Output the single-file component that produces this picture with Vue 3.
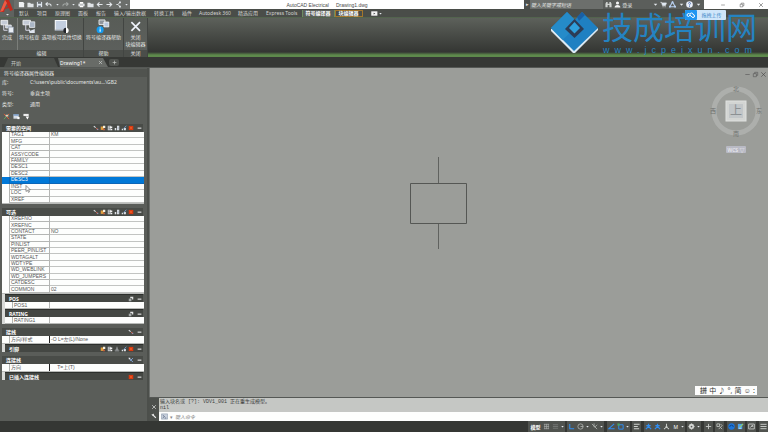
<script setup>
import { h, ref } from 'vue'

const W = '#e4e8ec', B = '#2f8df0', G = '#b4b8b4', R = '#d8390f', O = '#e0a040'
// Each icon is a list of [path, fill, stroke, strokeWidth] on an 8x8 grid
const icons = {
  newFile: [['M1 1h5l1 1.5V7H1z', '#eef0f2']],
  open: [['M0.5 2h3l1 1h3v4h-7z', '#dfe3e6']],
  save: [['M1 1h6v6H1z', '#dfe6ee'], ['M2.2 1h3.6v2.2H2.2zM2.5 5h3v2h-3z', '#6a6f74']],
  undo: [['M1 3.5h4.5q1.5 0 1.5 2.5M3 1.5L1 3.5l2 2', 'none', W, 1.2]],
  redo: [['M7 3.5H2.5Q1 3.5 1 6M5 1.5l2 2-2 2', 'none', '#a4a8a6', 1.2]],
  print: [['M0.5 3h7v3h-7z', W], ['M2 1h4v2H2zM2 5h4v2H2z', '#fff'], ['M2 4.5h4', 'none', '#777', 0.7]],
  left: [['M7.5 4H1.5M4 1.5L1.5 4 4 6.5', 'none', W, 1.3]],
  right: [['M0.5 4h6M4 1.5L6.5 4 4 6.5', 'none', W, 1.3]],
  net: [['M1.5 4h2l2-2.5M3.5 4l2 2.5', 'none', W, 1], ['M4.7 0.5h2v2h-2zM4.7 5.5h2v2h-2z', W]],
  caret: [['M2 3h4L4 5.5z', W]],
  bino: [['M0.5 3l1-2h1.5v2h2V1h1.5l1 2v4H5V4.5H3V7H0.5z', '#cfd2d0']],
  user: [['M4 0.5a1.8 1.8 0 1 1 0 3.6a1.8 1.8 0 1 1 0-3.6M0.7 7.5q0-3 3.3-3t3.3 3z', '#f2f2f2']],
  cart: [['M0.5 1.5h1.3l1 3.5h3.5l1-2.8H2.3', '#dfe8f4', W, 0.8], ['M3 6h1v1.2H3zM5.3 6h1v1.2h-1z', W]],
  tri: [['M4 1L7 6.5H1z', 'none', '#b8d0f0', 1.2], ['M3 0.5h2v2H3zM0 5.5h2v2H0zM6 5.5h2v2H6z', '#b8d0f0']],
  help: [['M4 0.2a3.8 3.8 0 1 1 0 7.6a3.8 3.8 0 1 1 0-7.6', '#e8eef8'], ['M2.9 3q0-1.3 1.1-1.3T5.1 3Q5 3.8 4 4.3v.8M4 5.7v1', 'none', '#3c62a8', 0.9]],
  min: [['M1.5 4h5', 'none', '#555', 0.7]],
  max: [['M1.5 3h3.5v3.5H1.5zM3 3V1.5h3.5V5H5', 'none', '#555', 0.7]],
  close: [['M1.5 1.5l5 5M6.5 1.5l-5 5', 'none', '#444', 0.7]],
  done: [['M0.5 0.7h3.6v2.4H0.5z', '#c4cbd6', '#fff', 0.4], ['M3 3.2h3v1.6H3z', '#bcc6d4', '#f4f4f4', 0.4], ['M4.6 4.3h2.6v3H4.6z', '#e9eef4', '#8d98a8', 0.4], ['M2 3v3h2', 'none', '#dde', 0.5]],
  check: [['M0.5 0.7h4v2.4h-4z', '#c4cbd6', '#fff', 0.4], ['M4 1.5h2.8v3H4z', '#aab6c6', '#edf0f4', 0.4], ['M3.4 4.8l1 1.5 2.4-1v2.2H4z', '#dfe5ee'], ['M2 3v3h2', 'none', '#dde', 0.5]],
  panel: [['M0.7 0.8h6v5h-6z', '#c3cfe0', '#f6f8fa', 0.6], ['M0.7 6h6', 'none', '#8f98a4', 0.8], ['M6.4 4.7a1.4 1.4 0 1 0 0 2.8z', '#20242a'], ['M6.4 4.7a1.4 1.4 0 1 1 0 2.8z', '#fff']],
  chelp: [['M1.6 0.5h3.2v2.4H1.6z', '#8e949b', '#e4e6e8', 0.5], ['M4.2 1.6h2.6v2.6H4.2z', '#b9c7dc', '#fff', 0.4], ['M2.2 3.8a1.9 1.9 0 1 1 0 3.8a1.9 1.9 0 1 1 0-3.8', '#149bf0'], ['M2.2 4.5v.5M2.2 5.4v1.4', 'none', '#fff', 0.6]],
  bigx: [['M1.8 1.7l4.6 4.6M6.4 1.7L1.8 6.3', 'none', '#eef2fa', 0.9]],
  x: [['M1.5 1.5l5 5M6.5 1.5l-5 5', 'none', '#c8cac8', 1.1]],
  plus: [['M4 1v6M1 4h6', 'none', '#c0c3c0', 1.1]],
  cam: [['M0.3 1.5h7v5h-7z', '#f4f4f4'], ['M3 3l2 1-2 1z', '#444']],
  axes: [['M1 1l6 6M7 1L3 5', 'none', '#e05a30', 1.1], ['M1 7l3-3', 'none', '#62a860', 1.1], ['M3 2h3v2H3z', '#ddd6c0']],
  props: [['M0.5 1.5h6v5h-6z', '#d6dde6'], ['M0.5 1.5h6V3h-6z', '#6b93c4'], ['M5 4.5h2.5v2.5H5z', '#fff']],
  drop: [['M0.5 1h6v2.5h-6z', '#eee'], ['M3 4h4L5 7.3z', '#fff']],
  move: [['M1 1.5l2.5 2', 'none', W, 1.4], ['M4.5 4l2 2.5', 'none', '#d86a5a', 1.4], ['M5 6.8h2V5z', '#7aa0d8']],
  add: [['M1 2h4v4.5H1z', O], ['M4 1h3v3H4z', '#f5f0e0'], ['M4 5h2.5v2H4z', '#c8603c']],
  copy: [['M1 1h4v6H1z', '#c8ccd0'], ['M4 2h3v2H4zM5 5h2v2H5z', '#f2f2f2'], ['M2 2.5h2M2 5h2', 'none', '#555', 0.8]],
  list: [['M1 4h2v3H1zM4 1h3v6H4z', '#dfe2e6'], ['M5 3h1M5 5h1', 'none', '#4f6b90', 0.9]],
  edit: [['M1 5h2v2H1zM4 4h2.5v3H4z', '#dfe2e6'], ['M3.5 5L7 1', 'none', '#7a9fd0', 1.2]],
  del: [['M1 1.2h6v5.6H1z', R], ['M2.5 2.5l3 3M5.5 2.5l-3 3', 'none', '#f26a30', 0.8]],
  minus: [['M1 4.2h6', 'none', '#f4f4f4', 1.6]],
  tree: [['M4 1v5M1 6.5h6M4 3.5l2 2M4 3.5l-2 2', 'none', '#bfc3c8', 0.9]],
  wire: [['M1 1.5l5.5 5M6.5 1.5L3 5', 'none', '#88aee4', 1.2], ['M1 1h2v2H1z', '#eee']],
  copies: [['M1 3.5h3.5V7H1z', '#a6abaa'], ['M3 1h4v3.5H5.5V3H3z', '#e6e8e8']],
  wrench: [['M2 2l4.5 4.5', 'none', '#eee', 1.5], ['M0.5 1.5L2 3.5 4 2 3 0.5 2.5 2z', '#eee']],
  prompt: [['M0.5 1h7v6h-7z', '#c8d0dc', '#8090a4', 0.6], ['M2 2.5L4 4 2 5.5M4.3 5.7H6', 'none', '#3a4e6a', 0.7]],
  grid: [['M1 1.5h6M1 4h6M1 6.5h6M2 1v6M4 1v6M6 1v6', 'none', '#a5a8a5', 0.8]],
  dots: [['M1 2h6M1 4h6M1 6h6', 'none', '#747774', 1.1]],
  ortho: [['M2 1v5.5h5', 'none', B, 1.2]],
  polar: [['M4 1a3 3 0 1 1-3 3M4 4h3M4 1a3 3 0 0 0-3 3', 'none', G, 0.9]],
  iso: [['M1 1l6 6M3.5 0.5v4M7 2L4 5', 'none', G, 0.9]],
  snap: [['M7 1L1 6.5h6.5', 'none', B, 1.2]],
  osnap: [['M2 2h5v5H2z', 'none', B, 1.1], ['M0.5 0.5h2.5v2.5H0.5z', '#4aa85a']],
  lines: [['M1 1.5h6.5M1 4h4.5M1 6.5h6', 'none', '#d0d3d0', 1.2]],
  man: [['M4 0.8v3L1 7M4 3.8L7 7M1.5 3h5', 'none', B, 1.4]],
  manGray: [['M4 0.8v3L1.3 7M4 3.8L6.7 7M2.5 5h3', 'none', '#c8ccc8', 1.2]],
  gear: [['M4 1.2a2.8 2.8 0 1 1 0 5.6a2.8 2.8 0 1 1 0-5.6M4 0.5v7M0.5 4h7', '#d6d9d6', '#d6d9d6', 0.8], ['M4 3a1 1 0 1 1 0 2a1 1 0 1 1 0-2', '#555']],
  units: [['M1 1h3v3H1zM5 1l2 2-4 4M5 5l2 2', 'none', '#c8ccc8', 0.9]],
  ball: [['M4 0.3a3.7 3.7 0 1 1 0 7.4a3.7 3.7 0 1 1 0-7.4', '#1c74d8'], ['M2 4.5a2 2 0 0 1 4 0', 'none', '#0f4282', 1]],
  note: [['M1 1h5v6H1z', '#4aa0ec'], ['M3 5l4-4', 'none', '#8ed06a', 1.3], ['M2 6h3', 'none', '#fff', 0.7]],
  full: [['M0.8 1.2h6.4v5.6H0.8z', 'none', '#d6d9d6', 0.9], ['M2.5 5l3-2M4 3h1.5v1.5', 'none', '#d6d9d6', 0.9]],
  menu: [['M0.5 1.5h7M0.5 4h7M0.5 6.5h7', 'none', '#d6d9d6', 1]],
}
const Ico = (p) => h('svg', { viewBox: '0 0 8 8', 'aria-hidden': 'true' },
  icons[p.n].map(([d, fill, stroke, w]) => h('path', { d, fill, stroke: stroke || 'none', 'stroke-width': w || 0 })))
Ico.props = ['n']

const quick = ['newFile', 'open', 'save', 'undo', 'caret', 'redo', 'caret', 'print', 'open', 'left', 'right', 'net', 'caret']
const tabs = ['默认', '项目', '原理图', '面板', '报告', '输入/输出数据', '转换工具', '插件', 'Autodesk 360', '精选应用', 'Express Tools', '符号编译器', '块编辑器']
const info = [['库:', 'C:\\users\\public\\documents\\au...\\GB2'], ['符号:', '垂直主项'], ['类型:', '通用']]
const tools = ['move', 'add', 'copy', 'list', 'edit', 'del']
const sections = [
  { title: '需要的空间', icons: tools, kind: 'r11', rows: [['TAG1', 'KM'], ['MFG'], ['CAT'], ['ASSYCODE'], ['FAMILY'], ['DESC1'], ['DESC2'], ['DESC3'], ['INST'], ['LOC'], ['XREF']] },
  { title: '可选', icons: tools, kind: 'r12', rows: [['XREFNO'], ['XREFNC'], ['CONTACT', 'NO'], ['STATE'], ['PINLIST'], ['PEER_PINLIST'], ['WDTAGALT'], ['WDTYPE'], ['WD_WEBLINK'], ['WD_JUMPERS'], ['CATDESC'], ['COMMON', '02']],
    subs: [{ title: 'POS', icons: ['copies'], rows: [['POS1']] }, { title: 'RATING', icons: ['copies'], rows: [['RATING1']] }] },
  { title: '接线', icons: ['move'], kind: 'one', rows: [['方向/样式', '-O L=左(L)/None']], subs: [{ title: '引脚', icons: ['add', 'copy', 'tree', 'edit', 'del'] }] },
  { title: '连接线', icons: ['wire'], kind: 'one', rows: [['方向', '　 T=上(T)']], subs: [{ title: '已插入连接线', icons: ['del'] }] },
]
const selected = ref('DESC3')
const status = ['grid', 'dots', 'caret', '|', 'ortho', 'polar', 'caret', 'iso', 'caret', '|', 'snap', 'osnap', 'caret', '|', 'lines', '|', 'man', 'man', 'manGray', 'M', 'caret', '|', 'gear', 'caret', '|', 'plus', '|', 'units', '|', 'ball', 'note', '|', 'full', '|', 'menu']
const command = ref('')
const query = ref('')
</script>

<template>
  <div class="app">
    <header class="top">
      <button class="logo" aria-label="A">
        <svg viewBox="0 0 14 16"><path d="M0 12L5 0h4l4 10-3 1-1-3-4 1-1 3z" fill="#c3281c" /><path d="M6 3l2 4-3 1z" fill="#5b5e5b" /><path d="M5 0L0 12l3-1 4-8z" fill="#ee5a44" /><path d="M6 14h3l-1.500 1.500z" fill="#ddd" /></svg>
      </button>
      <div class="stack">
        <div class="titlebar">
          <nav class="quick"><button v-for="(q, i) in quick" :key="i" :class="{ small: q === 'caret' }"><Ico :n="q" /></button></nav>
          <h1 class="title"><span>AutoCAD Electrical</span><span>Drawing1.dwg</span></h1>
          <label class="search"><span>▸</span><input v-model="query" placeholder="键入关键字或短语" /></label>
          <div class="account">
            <Ico n="bino" /><Ico n="user" /><button>登录</button><i></i><Ico n="caret" /><Ico n="cart" /><Ico n="tri" /><Ico n="caret" /><Ico n="help" /><Ico n="caret" />
          </div>
          <div class="winbtns"><button><Ico n="min" /></button><button><Ico n="max" /></button><button><Ico n="close" /></button></div>
        </div>
        <nav class="tabs">
          <button v-for="t in tabs" :key="t" :class="{ on: t === '符号编译器', box: t === '块编辑器' }">{{ t }}</button>
          <Ico n="cam" /><Ico n="caret" />
        </nav>
      </div>
    </header>

    <section class="ribbon">
      <div class="panel edit">
        <div class="cmds">
          <button class="first"><Ico n="done" />完成</button>
          <button><Ico n="check" />符号核查</button>
          <button><Ico n="panel" />选项板可见性切换</button>
        </div>
        <div class="cap">编辑</div>
      </div>
      <div class="panel aid">
        <div class="cmds"><button><Ico n="chelp" />符号编译器帮助</button></div>
        <div class="cap">帮助</div>
      </div>
      <div class="panel shut">
        <div class="cmds"><button><Ico n="bigx" />关闭<br />块编辑器</button></div>
        <div class="cap">关闭</div>
      </div>
    </section>

    <nav class="docs">
      <button class="doc">开始</button>
      <button class="doc cur">Drawing1*<Ico n="x" /></button>
      <button class="more"><Ico n="plus" /></button>
    </nav>

    <main class="work">
      <aside class="palette">
        <h2>符号编译器属性编辑器</h2>
        <dl><div v-for="r in info" :key="r[0]"><dt>{{ r[0] }}</dt><dd>{{ r[1] }}</dd></div></dl>
        <div class="tools"><button><Ico n="axes" /></button><button><Ico n="props" /></button><button><Ico n="drop" /></button></div>
        <section v-for="s in sections" :key="s.title" class="sec">
          <h3><span>{{ s.title }}</span><Ico v-for="n in s.icons" :key="n" :n="n" /><Ico n="minus" class="fold" /></h3>
          <table :class="s.kind">
            <tbody>
              <tr v-for="r in s.rows" :key="r[0]" :class="{ sel: r[0] === selected }" @click="selected = r[0]">
                <td class="gut"></td><th scope="row">{{ r[0] }}</th><td>{{ r[1] }}</td>
              </tr>
            </tbody>
          </table>
          <div v-for="u in s.subs" :key="u.title" class="sub">
            <h3><span>{{ u.title }}</span><Ico v-for="n in u.icons" :key="n" :n="n" /><Ico n="minus" class="fold" /></h3>
            <table v-if="u.rows" class="r1">
              <tbody><tr v-for="r in u.rows" :key="r[0]"><td class="gut"></td><th scope="row">{{ r[0] }}</th><td>{{ r[1] }}</td></tr></tbody>
            </table>
          </div>
        </section>
        <svg class="pointer" viewBox="0 0 6 8"><path d="M1 0.500v6l1.500-1.300 1 2.200 1-.5-1-2.100h1.800z" fill="#fff" stroke="#555" stroke-width=".6" /></svg>
      </aside>

      <div class="stage">
        <div class="canvas">
          <svg class="symbol" viewBox="0 0 58 92">
            <path d="M28.500 0v26M28.500 67v25" stroke="#60625f" fill="none" />
            <path d="M0.500 26.500h56v40h-56z" stroke="#555754" fill="none" />
          </svg>
          <div class="mdi"><Ico n="min" /><Ico n="max" /><Ico n="close" /></div>
          <div class="cube">
            <svg viewBox="0 0 52 52">
              <circle cx="26" cy="26" r="22" fill="none" stroke="#adafac" stroke-width="5" />
              <rect x="16" y="16" width="20" height="20" fill="#d3d5d3" stroke="#dfe1df" />
              <rect x="19" y="19" width="14" height="14" fill="#c2c6c8" />
              <g class="dirs"><text x="26" y="6">北</text><text x="26" y="51">南</text><text x="3" y="28">西</text><text x="49" y="28">东</text></g>
              <text class="face" x="26" y="30">上</text>
            </svg>
          </div>
          <button class="wcs">WCS ▽</button>
          <div class="ime"><b>拼</b><span>中</span><span>♪</span><span>°,</span><span>简</span><span>☺</span><span>:</span></div>
        </div>
        <div class="cmd">
          <div class="grip"><Ico n="x" /><Ico n="wrench" /></div>
          <div class="lines">
            <pre>输入块名或 [?]: VDV1_001 正在重生成模型。
nil</pre>
            <label><Ico n="prompt" /><span>▾</span><input v-model="command" placeholder="键入命令" /></label>
          </div>
        </div>
      </div>
    </main>

    <footer class="status">
      <button class="model">模型</button>
      <template v-for="(n, i) in status" :key="i">
        <i v-if="n === '|'"></i>
        <button v-else-if="n === 'M'" class="scale">M</button>
        <button v-else :class="{ small: n === 'caret' }"><Ico :n="n" /></button>
      </template>
    </footer>

    <div class="mark">
      <svg viewBox="0 0 48 42">
        <path d="M0 17v2L22 41h2L47 18v-2z" fill="#dceaf4" />
        <path d="M16 0L0 16l23 23 24-23L31 0 24 8z" fill="#1f80c2" />
        <path d="M16 0L0 16l11.500 12L24 16V8z" fill="#258bc9" />
        <path d="M23.500 7L14 17l9.500 9L33 17z" fill="#2c3c56" />
        <path d="M23.500 10L18 16l5.500 5.500L29 16z" fill="#2f9fdc" />
        <path d="M26 5l5-5 3 3-6 6z" fill="#1a5fa4" />
      </svg>
      <div class="brand"><strong>技成培训网</strong><span>www.jcpeixun.com</span></div>
    </div>
    <div class="drag"><svg viewBox="0 0 12 10"><rect width="12" height="10" rx="1" fill="#1f96f2" /><path d="M3.500 6.500a1.500 1.500 0 1 1 1.500-2a1.500 1.500 0 0 1 3 0a1.500 1.500 0 1 1 0 3q-1 0-2-1.500t-2 0z" fill="none" stroke="#fff" /></svg><span>拖拽上传</span></div>
  </div>
</template>

<style>
body { background: #353734; }
</style>
<style scoped>
* { box-sizing: border-box; }
.app { position: relative; min-height: 100vh; display: flex; flex-direction: column; overflow: hidden; background: #353734; color: #e4e6e4; font: 5px/6px "Noto Sans", "Noto Sans CJK SC", sans-serif; }
button, input { font: inherit; color: inherit; border: 0; padding: 0; margin: 0; background: none; min-width: 0; outline: 0; }
button { display: flex; align-items: center; justify-content: center; white-space: nowrap; }
svg { display: block; width: 7px; height: 7px; flex: none; }
h1, h2, h3, dl, dd, pre { margin: 0; font: inherit; }

.top { display: flex; background: #4a4d49; }
.logo { width: 14px; height: 17px; background: #5f625f; align-items: flex-start; }
.logo svg { width: 14px; height: 16px; }
.stack { flex: 1; min-width: 0; }
.titlebar { display: flex; height: 9px; background: #fff; }
.quick { display: flex; align-items: center; justify-content: space-between; width: 116px; padding: 0 1px 0 4px; background: #6b6e6b; }
.small svg { width: 5px; height: 5px; }
.title { flex: 1; display: flex; align-items: center; justify-content: center; gap: 7px; color: #4a4a4a; font-family: "Liberation Sans", sans-serif; }
.search { width: 79px; display: flex; align-items: center; background: #6c6f6c; }
.search span { width: 6px; background: #4c4f4c; text-align: center; line-height: 9px; }
.search input { flex: 1; font-style: italic; padding-left: 1px; }
::placeholder { color: inherit; opacity: 1; }
.account { width: 101px; display: flex; align-items: center; justify-content: space-between; padding: 0 2px; background: #5b5e5b; }
.account i { width: 16px; }
.winbtns { width: 64px; display: flex; align-items: center; justify-content: space-between; padding: 0 4px 0 16px; }
.winbtns svg { width: 6px; height: 6px; }
.tabs { display: flex; align-items: center; height: 8px; padding-left: 1px; }
.tabs button { padding: 0 4px; height: 7px; color: #d2d4d2; }
.tabs button:nth-child(9) { padding: 0 3px; }
.tabs .on { background: #5c605b; color: #fff; border: 0 solid #6d8d62; border-width: 0 1px; padding: 0 3px; font-weight: bold; }
.tabs .box { border: 1px solid #a4762c; color: #fff; padding: 0 3px; font-weight: bold; }
.tabs > svg { margin-left: 8px; }
.tabs > svg + svg { margin-left: 0; width: 5px; }

.ribbon { display: flex; height: 40px; background: linear-gradient(#5d615b, #343633 34px, #5e8a4c 37px, #5e8a4c); border-top: 1px solid #53644e; }
.panel { display: flex; flex-direction: column; background: linear-gradient(#585c57, #5d605d); border-right: 1px solid #424542; }
.edit { width: 84px; }
.aid { width: 40px; }
.shut { width: 24px; }
.cmds { flex: 1; display: flex; }
.cmds button { flex-direction: column; justify-content: flex-start; flex: 1 0 auto; line-height: 7px; padding-top: 1px; }
.cmds .first { flex: none; width: 18px; padding-right: 3px; border-right: 1px solid #7b7e7a; }
.cmds svg { width: 15px; height: 15px; }
.cap { height: 7px; text-align: center; line-height: 7px; background: #4b4e4a; }

.docs { display: flex; align-items: flex-end; height: 11px; padding-left: 4px; background: #363835; border-bottom: 1px solid #555855; }
.doc { width: 54px; height: 9px; justify-content: flex-start; padding-left: 7px; background: #4b4e4a; color: #c4c6c4; clip-path: polygon(4px 0, 50px 0, 100% 100%, 0 100%); }
.cur { width: 50px; padding-left: 2px; justify-content: space-between; padding-right: 5px; background: #686b67; color: #fff; clip-path: polygon(0 0, 45px 0, 100% 100%, 2px 100%); }
.doc svg, .more svg { width: 5px; height: 5px; }
.more { width: 10px; height: 7px; margin: 0 0 1px 1px; border-radius: 2px; background: #50534f; }

.work { flex: 1; display: flex; min-height: 0; }
.palette { position: relative; width: 149px; padding: 1px 4px 0 2px; background: #5a5d59; border-right: 2px solid #4c4f4b; }
.palette h2 { margin: 0 -4px 0 -2px; padding-left: 4px; height: 8px; line-height: 8px; background: #50534f; }
dl div { display: flex; height: 11px; line-height: 11px; }
dt { width: 28px; }
.tools { display: flex; gap: 3px; height: 13px; align-items: center; padding-left: 1px; margin-bottom: 1px; }
.sec { margin-bottom: 4px; }
.sec h3 { display: flex; align-items: center; gap: 1px; height: 8px; padding: 0 1px 0 4px; background: #494c48; color: #fff; font-weight: bold; }
.sec h3 span { flex: 1; }
.sec h3 svg { width: 6px; height: 6px; }
.sec h3 .fold { margin-left: 2px; width: 5px; }
table { width: 142px; border-collapse: separate; border-spacing: 0; table-layout: fixed; background: #fdfefd; color: #555; border-bottom: 1px solid #b8bab8; line-height: 5px; }
.r11 { height: 72px; }
.r12 { height: 78px; }
.r1 { height: 7px; }
.one { height: 8px; }
td, th { padding: 0 0 0 1px; text-align: left; font-weight: normal; white-space: nowrap; border-bottom: 1px solid #c2c4c2; font-family: "Liberation Sans", "Noto Sans CJK SC", sans-serif; }
th { width: 41px; border: solid #b4b6b4; border-width: 0 1px 1px 1px; }
.gut { width: 7px; border-bottom: 0; }
.sel td, .sel th { background: #0078d7; border-color: #0b66b8; color: #fff; }
.sub { border-left: 3px solid #d8dad8; }
.sub h3 { background: #444743; border-top: 1px solid #2c2f2c; }
.sub table { width: 139px; }
.sub th { width: 38px; }
.r1 td, .r1 th, .one td, .one th { border-bottom: 0; }
.one th { border-right-color: #222; }
.pointer { position: absolute; left: 25px; top: 117px; width: 6px; height: 8px; }

.stage { flex: 1; min-width: 0; display: flex; flex-direction: column; }
.canvas { position: relative; flex: 1; background: #9b9d99; border-left: 1px solid #6b6e6b; }
.symbol { position: absolute; left: 260px; top: 89px; width: 58px; height: 92px; }
.mdi { position: absolute; right: 1px; top: 3px; display: flex; gap: 1px; }
.cube { position: absolute; right: 6px; top: 17px; }
.cube svg { width: 52px; height: 52px; overflow: visible; }
.dirs { font-size: 6px; fill: #6f726f; text-anchor: middle; }
.face { font-size: 12px; fill: #8b9093; text-anchor: middle; }
.wcs { position: absolute; right: 22px; top: 78px; width: 20px; height: 7px; background: #b9bac4; border-radius: 1px; color: #f2f2f6; }
.ime { position: absolute; right: 11px; bottom: 2px; display: flex; align-items: center; justify-content: space-between; width: 62px; height: 9px; padding: 0 2px 0 5px; background: #fdfdfd; color: #333; font-size: 7px; }
.ime b { font-weight: normal; background: #d4d6d4; }
.cmd { display: flex; border-top: 1px solid #555855; }
.grip { width: 10px; display: flex; flex-direction: column; justify-content: space-between; align-items: center; padding: 6px 0 2px; background: #4d504c; }
.grip svg { width: 6px; height: 6px; }
.lines { flex: 1; background: #c5c7c4; }
pre { height: 14px; padding: 1px 0 0 1px; color: #3c3e3c; font-family: "Liberation Mono", "Noto Sans CJK SC", monospace; }
.cmd label { display: flex; align-items: center; gap: 2px; height: 9px; padding-left: 2px; background: #fdfefd; color: #888; }
.cmd input { flex: 1; font-style: italic; }
.status { display: flex; align-items: center; justify-content: flex-end; height: 11px; }
.status button { height: 11px; flex: none; padding: 0 1px; background: #50534f; }
.status .small { padding: 0; }
.status .model, .status .scale { padding: 0 2px; color: #fff; }
.status .model { font-weight: bold; }
.status i { width: 2px; }
.status i:nth-of-type(even) { width: 3px; }

.mark { position: absolute; right: 8px; top: 12px; display: flex; gap: 3px; color: #2483c2; pointer-events: none; }
.mark > svg { width: 48px; height: 42px; }
.brand { display: flex; flex-direction: column; width: 158px; }
.brand strong { font: 31px/28px "Noto Sans CJK SC", sans-serif; white-space: nowrap; }
.brand span { font: 9px/10px "Liberation Sans", sans-serif; letter-spacing: 5px; padding: 5px 0 0 1px; white-space: nowrap; }
.drag { position: absolute; right: 42px; top: 10px; display: flex; align-items: center; height: 10px; background: #cfe6fa; color: #3b86c8; border-radius: 1px; }
.drag svg { width: 12px; height: 10px; }
.drag span { width: 29px; text-align: center; }
</style>
